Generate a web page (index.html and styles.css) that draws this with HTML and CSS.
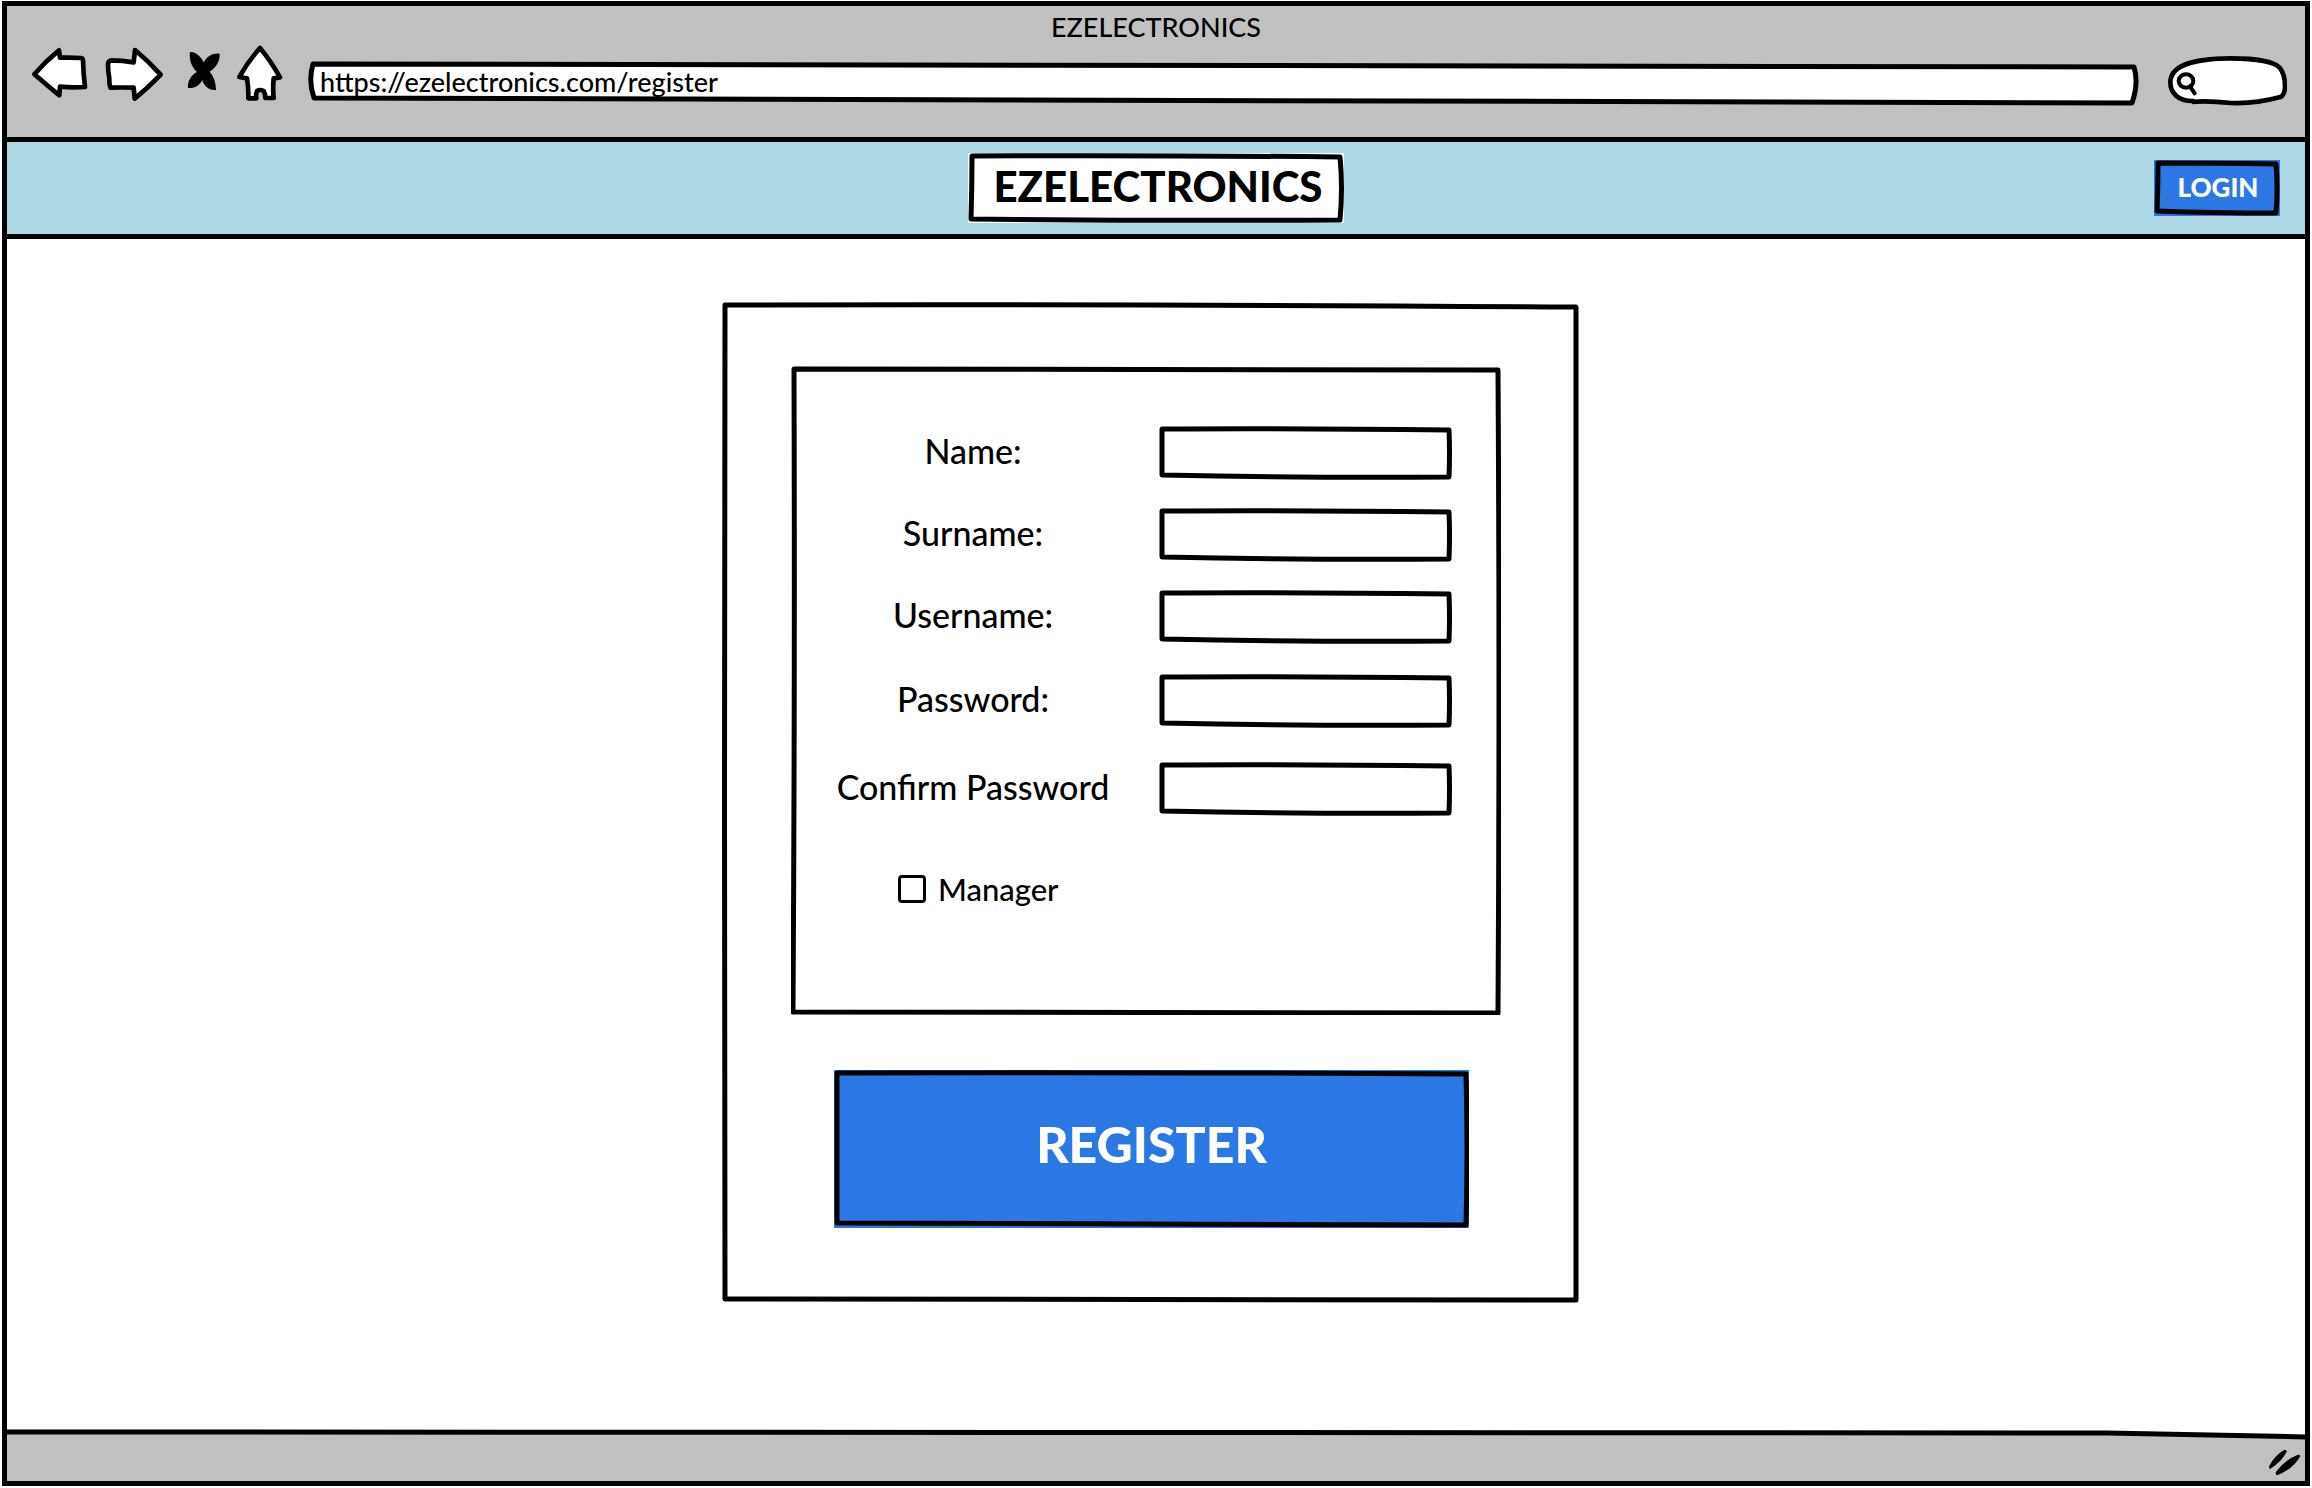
FILE: index.html
```html
<!DOCTYPE html>
<html lang="en">
<head>
<meta charset="utf-8">
<meta name="viewport" content="width=device-width, initial-scale=1">
<title>EZELECTRONICS - Register</title>
<link rel="stylesheet" href="styles.css">
</head>
<body>
<div class="window">
  <header class="chrome">
    <div class="chrome-title">EZELECTRONICS</div>
    <div class="toolbar">
      <nav class="nav-buttons" aria-label="Browser">
        <button class="tool" type="button" aria-label="Back">
          <svg width="66" height="62" viewBox="30 42 198 186"><path class="outline" d="M43 133Q76 94 117 61L120 83Q155 82 183 84Q189 85 189 92Q190 132 195 171Q158 174 120 170L118 196Q80 165 43 133Z"/></svg>
        </button>
        <button class="tool" type="button" aria-label="Forward">
          <svg width="67" height="62" viewBox="252 42 201 186"><path class="outline" d="M264 104Q264 93 274 91Q308 91 341 97L345 60Q386 94 422 134Q384 174 344 206L341 173Q306 172 271 173Q267 160 268 145Q264 125 264 104Z"/></svg>
        </button>
        <button class="tool" type="button" aria-label="Stop">
          <svg width="48" height="62" viewBox="477 42 144 186"><path d="M510 66C528 64 544 82 551 97C562 78 580 68 599 71C600 94 588 112 569 125C582 140 588 160 588 180C566 182 552 168 547 151C538 168 522 176 504 174C502 152 514 136 531 126C516 112 506 90 510 66Z"/></svg>
        </button>
        <button class="tool" type="button" aria-label="Home">
          <svg width="65" height="62" viewBox="645 42 195 186"><path class="outline" d="M720 54Q752 92 780 142L761 145Q758 175 761 204L736 204Q736 192 731 183Q720 177 711 183Q707 193 709 205L685 205Q686 175 681 145L658 141Q685 93 720 54Z"/></svg>
        </button>
      </nav>
      <input class="address" type="text" aria-label="Address" value="https://ezelectronics.com/register">
      <form class="search" role="search">
        <svg class="search-icon" width="34" height="51" viewBox="501 168 102 153" aria-hidden="true"><ellipse cx="555" cy="246" rx="22" ry="20"/><path d="M567 262L581 283"/></svg>
        <input class="search-input" type="search" aria-label="Search">
      </form>
    </div>
  </header>

  <div class="site-bar">
    <a class="logo" href="#">EZELECTRONICS</a>
    <button class="login" type="button">LOGIN</button>
  </div>

  <main class="content">
    <form class="card">
      <div class="panel">
        <div class="fields">
          <label for="name">Name:</label><input class="field" id="name" type="text">
          <label for="surname">Surname:</label><input class="field" id="surname" type="text">
          <label for="username">Username:</label><input class="field" id="username" type="text">
          <label for="password">Password:</label><input class="field" id="password" type="password">
          <label for="confirm">Confirm Password</label><input class="field" id="confirm" type="password">
        </div>
        <label class="manager"><input class="check" type="checkbox">Manager</label>
      </div>
      <button class="register" type="submit">REGISTER</button>
    </form>
  </main>

  <footer class="status">
    <svg width="34" height="28" viewBox="468 148 102 84" aria-hidden="true"><path d="M516 151Q525 150 524 156Q510 185 474 208Q470 206 472 198Q488 168 516 151ZM556 166Q563 164 565 169Q546 206 496 227Q489 225 492 216Q520 180 556 166Z"/></svg>
  </footer>
</div>
</body>
</html>
```
FILE: styles.css
```css
* {
  box-sizing: border-box;
}

body {
  margin: 0;
  background: #fff;
  color: #000;
  font-family: Lato, "Liberation Sans", sans-serif;
  font-size: 34px;
  font-weight: 500;
}

button,
input {
  margin: 0;
  padding: 0;
  border: 0;
  border-radius: 0;
  background: none;
  color: inherit;
  font: inherit;
}

.window {
  display: flex;
  flex-direction: column;
  min-height: calc(100vh - 3px);
  margin: 1px 2px 2px;
  border: 5px solid #000;
}

/* Browser chrome */
.chrome {
  display: flex;
  flex-direction: column;
  justify-content: space-between;
  height: 131px;
  padding: 7px 18px 31px 23px;
  background: #c1c1c1;
}

.chrome-title {
  padding-right: 5px;
  font-size: 27px;
  line-height: 28px;
  text-align: center;
}

.toolbar {
  display: flex;
  align-items: flex-end;
}

.nav-buttons {
  display: flex;
  gap: 8px;
  margin-right: 8px;
}

.tool svg {
  display: block;
}

.outline {
  fill: #fff;
  stroke: #000;
  stroke-width: 14;
  stroke-linejoin: round;
}

.address {
  flex: 1;
  min-width: 0;
  height: 45px;
  padding: 0 12px 4px;
  font-size: 27px;
  background: url("data:image/svg+xml,%3Csvg xmlns='http://www.w3.org/2000/svg' viewBox='0 0 1830 45' preserveAspectRatio='none'%3E%3Cpath d='M5 3Q900 2 1825 6Q1830 22 1823 42Q900 40 6 37Q0 20 5 3Z' fill='white' stroke='black' stroke-width='5' stroke-linejoin='round'/%3E%3C/svg%3E") center / 100% 100% no-repeat;
}

.search {
  display: flex;
  width: 119px;
  height: 51px;
  margin-left: 29px;
  background: url("data:image/svg+xml,%3Csvg xmlns='http://www.w3.org/2000/svg' viewBox='501 168 357 153' preserveAspectRatio='none'%3E%3Cpath d='M580 306C530 308 508 280 508 250C508 200 580 178 690 178C770 178 820 190 835 205C848 220 852 240 852 262C852 280 845 293 835 295C780 310 740 314 690 312C650 308 600 306 572 309' fill='white' stroke='black' stroke-width='14' stroke-linejoin='round'/%3E%3C/svg%3E") center / 100% 100% no-repeat;
}

.search-icon {
  flex: none;
  fill: none;
  stroke: #000;
  stroke-width: 12;
  stroke-linecap: round;
}

.search-input {
  flex: 1;
  min-width: 0;
  font-size: 20px;
}

/* Site bar */
.site-bar {
  display: grid;
  grid-template-columns: 1fr auto 1fr;
  align-items: center;
  height: 102px;
  margin: 0 -5px;
  padding: 0 25px;
  border: 5px solid #000;
  border-radius: 4px;
  background: #add8e6;
}

.logo {
  grid-column: 2;
  width: 376px;
  padding: 0 0 4px 4px;
  font-size: 42px;
  font-weight: 900;
  line-height: 66px;
  text-align: center;
  text-decoration: none;
  color: #000;
  background: #fff url("data:image/svg+xml,%3Csvg xmlns='http://www.w3.org/2000/svg' viewBox='0 0 376 70' preserveAspectRatio='none'%3E%3Cpath d='M4 3Q180 2 372 4Q375 35 372 67Q190 68 3 66Q4 35 4 3Z' fill='none' stroke='black' stroke-width='5' stroke-linejoin='round'/%3E%3C/svg%3E") center / 100% 100% no-repeat;
}

.login {
  justify-self: end;
  width: 126px;
  height: 56px;
  padding: 0 0 2px 2px;
  font-size: 26px;
  font-weight: 900;
  color: #fff;
  background: #2b78e4 url("data:image/svg+xml,%3Csvg xmlns='http://www.w3.org/2000/svg' viewBox='0 0 126 56' preserveAspectRatio='none'%3E%3Cpath d='M4 3Q60 3 122 4Q124 28 122 53Q60 53 3 51Q4 28 4 3Z' fill='none' stroke='black' stroke-width='5' stroke-linejoin='round'/%3E%3C/svg%3E") center / 100% 100% no-repeat;
}

/* Registration form */
.content {
  flex: 1;
  display: flex;
  justify-content: center;
  align-items: flex-start;
  padding: 63px 11px 63px 0;
}

.card {
  display: flex;
  flex-direction: column;
  gap: 55px;
  width: 857px;
  padding: 64px 78px 75px 69px;
  background: url("data:image/svg+xml,%3Csvg xmlns='http://www.w3.org/2000/svg' viewBox='0 0 857 1001' preserveAspectRatio='none'%3E%3Cpath d='M3 3Q400 2 854 5Q855 500 854 998Q400 999 3 997Q2 500 3 3Z' fill='none' stroke='black' stroke-width='5' stroke-linejoin='round'/%3E%3C/svg%3E") center / 100% 100% no-repeat;
}

.panel {
  padding: 60px 49px 108px 0;
  background: url("data:image/svg+xml,%3Csvg xmlns='http://www.w3.org/2000/svg' viewBox='0 0 710 649' preserveAspectRatio='none'%3E%3Cpath d='M3 3Q350 2 707 4Q709 320 707 647Q350 648 2 646Q4 320 3 3Z' fill='none' stroke='black' stroke-width='5' stroke-linejoin='round'/%3E%3C/svg%3E") center / 100% 100% no-repeat;
}

.fields {
  display: grid;
  grid-template-columns: 1fr 293px;
  grid-template-rows: 82px 82px 84px 88px 54px;
  column-gap: 4px;
  line-height: 50px;
  text-align: center;
}

.field {
  width: 100%;
  height: 54px;
  padding: 0 12px;
  background: url("data:image/svg+xml,%3Csvg xmlns='http://www.w3.org/2000/svg' viewBox='0 0 293 54' preserveAspectRatio='none'%3E%3Cpath d='M3 3Q130 2 290 4Q291 28 290 51Q150 52 3 49Q3 28 3 3Z' fill='none' stroke='black' stroke-width='5' stroke-linejoin='round'/%3E%3C/svg%3E") center / 100% 100% no-repeat;
}

.manager {
  display: flex;
  align-items: center;
  gap: 12px;
  width: max-content;
  margin: 55px 0 0 107px;
  font-size: 31px;
  line-height: 36px;
}

.check {
  appearance: none;
  width: 28px;
  height: 28px;
  border: 3px solid #000;
  border-radius: 4px;
  background: #fff;
}

.register {
  width: 635px;
  height: 158px;
  margin-left: 43px;
  padding-bottom: 10px;
  font-size: 50px;
  font-weight: 900;
  color: #fff;
  background: #2b78e4 url("data:image/svg+xml,%3Csvg xmlns='http://www.w3.org/2000/svg' viewBox='0 0 635 158' preserveAspectRatio='none'%3E%3Cpath d='M3 3Q300 2 632 4Q634 80 632 155Q300 155 3 153Q3 80 3 3Z' fill='none' stroke='black' stroke-width='5' stroke-linejoin='round'/%3E%3C/svg%3E") center / 100% 100% no-repeat;
}

/* Status bar */
.status {
  display: flex;
  justify-content: flex-end;
  align-items: flex-end;
  height: 52px;
  padding: 0 3px 4px;
  background: url("data:image/svg+xml,%3Csvg xmlns='http://www.w3.org/2000/svg' viewBox='0 0 2298 52' preserveAspectRatio='none'%3E%3Cpath d='M-5 3L2100 4L2303 8V60H-5Z' fill='%23c1c1c1' stroke='black' stroke-width='5'/%3E%3C/svg%3E") center / 100% 100% no-repeat;
}
```
